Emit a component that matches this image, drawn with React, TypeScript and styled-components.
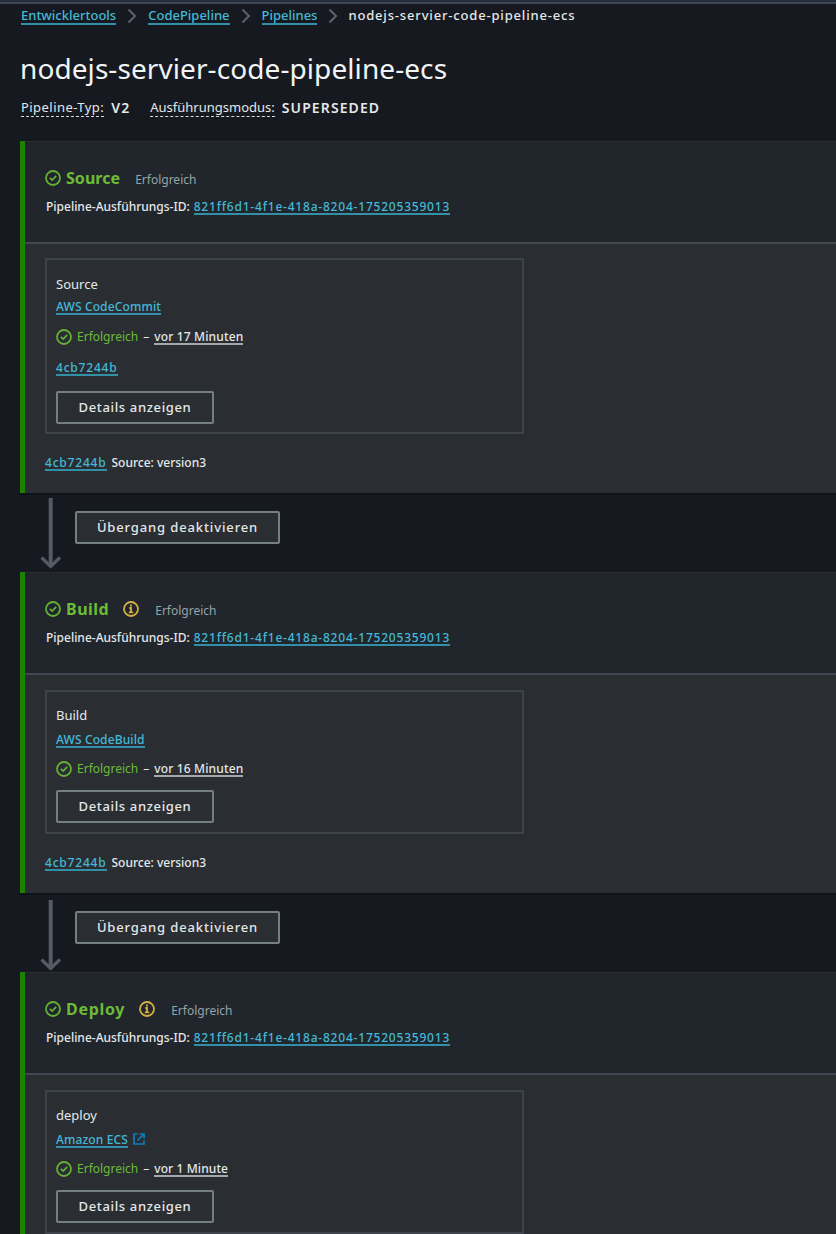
import React from "react";
import styled, { createGlobalStyle } from "styled-components";

const Global = createGlobalStyle`
  * { box-sizing: border-box; }
  html, body { margin: 0; padding: 0; background: #16191f; }
  body {
    font-family: "Noto Sans", "Open Sans", sans-serif;
    font-size: 12px;
    color: #e4e8e9;
  }
`;

const Page = styled.div`
  height: 1234px;
  overflow: hidden;
  background: #16191f;
`;

const TopBar = styled.div`
  height: 4px;
  background: #232f3e;
  border-bottom: 2px solid #414750;
`;

const Main = styled.main`
  padding-left: 20px;
`;

const Label = styled.span<{ $track?: number; $size?: number; $weight?: number; $color?: string }>`
  font-size: ${(p) => p.$size ?? 12}px;
  font-weight: ${(p) => p.$weight ?? 400};
  letter-spacing: ${(p) => p.$track ?? 0}px;
  color: ${(p) => p.$color ?? "#e4e8e9"};
  line-height: 16px;
  white-space: pre;
`;

const Link = styled.a<{ $track?: number; $size?: number }>`
  font-size: ${(p) => p.$size ?? 12}px;
  font-weight: 500;
  letter-spacing: ${(p) => p.$track ?? 0}px;
  line-height: ${(p) => (p.$size ? 17 : 15)}px;
  height: ${(p) => (p.$size ? 18 : 16)}px;
  color: #44b9d6;
  border-bottom: 2px solid #3490a8;
  white-space: pre;
`;

const Time = styled(Link)`
  margin-left: 5px;
  color: #e4e8e9;
  border-bottom-color: #a3a8aa;
`;

const Breadcrumbs = styled.nav`
  display: flex;
  align-items: center;
  height: 24px;
  padding-left: 1px;
`;

const CurrentPage = styled(Label)`
  margin: -2px 0 0 -1px;
`;

const Separator = styled.span`
  display: flex;
  justify-content: center;
  width: 32px;
`;

const Title = styled.h1`
  margin: 20px 0 0 0;
  height: 40px;
  line-height: 40px;
  font-size: 28px;
  font-weight: 400;
  letter-spacing: 0.08px;
  color: #f1f4f4;
  white-space: nowrap;
`;

const Meta = styled.div`
  display: flex;
  align-items: center;
  height: 20px;
  margin: 10px 0 23px 1px;
`;

const Term = styled(Label)`
  height: 18px;
  border-bottom: 1px dashed #d5dbdb;
`;

const Value = styled(Label)<{ $gap: number }>`
  margin: -1px ${(p) => p.$gap}px 0 7px;
`;

const Stage = styled.section<{ $height: number }>`
  height: ${(p) => p.$height}px;
  border-left: 5px solid #1d8102;
  background: #2a2e33;
`;

const StageHeader = styled.header`
  height: 103px;
  padding: 26px 0 0 20px;
  background: #21252c;
  border-top: 1px solid #2a2e33;
  border-bottom: 2px solid #414750;
`;

const StageTitle = styled.div`
  display: flex;
  align-items: center;
  height: 20px;
`;

const StageName = styled(Label)`
  margin-left: 5px;
  line-height: 20px;
`;

const WarnSlot = styled.span`
  display: flex;
  margin-left: 14px;
`;

const ExternalSlot = styled.span`
  display: flex;
  margin: -3px 0 0 5px;
`;

const StatusNote = styled(Label)<{ $gap: number }>`
  margin: 3px 0 0 ${(p) => p.$gap}px;
`;

const Line = styled.div<{ $top?: number }>`
  display: flex;
  align-items: center;
  height: 18px;
  margin-top: ${(p) => p.$top ?? 0}px;
`;

const ExecutionLabel = styled(Label)`
  margin: 0 4px 0 1px;
`;

const StageBody = styled.div<{ $top: number }>`
  padding: ${(p) => p.$top}px 0 0 20px;
`;

const ActionCard = styled.div<{ $height: number; $top: number }>`
  width: 479px;
  height: ${(p) => p.$height}px;
  padding: ${(p) => p.$top}px 0 0 9px;
  border: 2px solid #3d434b;
`;

const StatusText = styled(Label)`
  margin-left: 5px;
  margin-top: -1px;
`;

const Message = styled(Label)`
  margin-left: 5px;
`;

const Button = styled.button<{ $width: number; $top?: number }>`
  display: flex;
  align-items: center;
  justify-content: center;
  width: ${(p) => p.$width}px;
  height: 33px;
  margin: ${(p) => p.$top ?? 0}px 0 0;
  padding: 0 0 1px;
  border: 2px solid #748080;
  border-radius: 2px;
  background: #2a2e33;
  font-family: inherit;
`;

const Transition = styled.div<{ $pad: number }>`
  display: flex;
  align-items: flex-start;
  height: 79px;
  padding-left: 20px;
  border-top: 2px solid #101318;
  svg { margin-top: ${(p) => p.$pad}px; }
  button { margin: 16px 0 0 14px; }
`;

const Check = () => (
  <svg width="16" height="16" viewBox="0 0 16 16" fill="none" stroke="#64b034" strokeWidth="1.8">
    <circle cx="8" cy="8" r="7" />
    <path d="M4.8 7.8l2.400 2.300 4-4.200" />
  </svg>
);

const Warn = () => (
  <svg width="16" height="16" viewBox="0 0 16 16" fill="none" stroke="#d1b040" strokeWidth="1.8">
    <circle cx="8" cy="8" r="7" />
    <path d="M8 3.600v2M6.300 7H8v4.200M5.800 11.400h4.400" />
  </svg>
);

const Chevron = () => (
  <svg width="10" height="16" viewBox="0 0 10 16" fill="none" stroke="#5b636e" strokeWidth="2">
    <path d="M1.500 1.500L8 8l-6.500 6.500" />
  </svg>
);

const DownArrow = () => (
  <svg width="21" height="72" viewBox="0 0 21 72" fill="none" stroke="#545b64">
    <path d="M10.700 0v69" strokeWidth="4" />
    <path d="M1.500 59.500l9.200 9 9.200-9" strokeWidth="3.200" />
  </svg>
);

const External = () => (
  <svg width="12" height="12" viewBox="0 0 12 12" fill="none" stroke="#0f7dbd" strokeWidth="1.700">
    <path d="M4.500 1H1v10h10V7.500M6.500 1H11v4.500M11 1L4.500 7.500" />
  </svg>
);

type StageData = {
  name: string;
  nameTrack: number;
  warn?: boolean;
  noteGap: number;
  height: number;
  bodyTop: number;
  cardTop: number;
  cardHeight: number;
  action: string;
  provider: string;
  providerTop: number;
  statusTop: number;
  buttonTop: number;
  external?: boolean;
  time: string;
  timeTrack: number;
  cardCommit?: boolean;
  footer?: boolean;
};

const stages: StageData[] = [
  { name: "Source", nameTrack: 0.05, noteGap: 15, height: 352, bodyTop: 14, cardTop: 15, cardHeight: 176, action: "Source", provider: "AWS CodeCommit", providerTop: 5, statusTop: 12, buttonTop: 14, time: "vor 17 Minuten", timeTrack: 0.15, cardCommit: true, footer: true },
  { name: "Build", nameTrack: 0.5, warn: true, noteGap: 16, height: 321, bodyTop: 15, cardTop: 14, cardHeight: 144, action: "Build", provider: "AWS CodeBuild", providerTop: 7, statusTop: 11, buttonTop: 12, time: "vor 16 Minuten", timeTrack: 0.15, footer: true },
  { name: "Deploy", nameTrack: 0.7, warn: true, noteGap: 16, height: 321, bodyTop: 15, cardTop: 14, cardHeight: 144, action: "deploy", provider: "Amazon ECS", providerTop: 7, statusTop: 11, buttonTop: 12, external: true, time: "vor 1 Minute", timeTrack: 0.1 },
];

const StageView = ({ s }: { s: StageData }) => (
  <Stage $height={s.height}>
    <StageHeader>
      <StageTitle>
        <Check />
        <StageName $size={16} $weight={700} $track={s.nameTrack} $color="#6cbc35">{s.name}</StageName>
        {s.warn && <WarnSlot><Warn /></WarnSlot>}
        <StatusNote $gap={s.noteGap} $color="#95a5a6">Erfolgreich</StatusNote>
      </StageTitle>
      <Line $top={10}>
        <ExecutionLabel $weight={500}>Pipeline-Ausführungs-ID:</ExecutionLabel>
        <Link $track={0.79}>821ff6d1-4f1e-418a-8204-175205359013</Link>
      </Line>
    </StageHeader>
    <StageBody $top={s.bodyTop}>
      <ActionCard $height={s.cardHeight} $top={s.cardTop}>
        <Line><Label $size={13}>{s.action}</Label></Line>
        <Line $top={s.providerTop}>
          <Link $track={0.13}>{s.provider}</Link>
          {s.external && <ExternalSlot><External /></ExternalSlot>}
        </Line>
        <Line $top={s.statusTop}>
          <Check />
          <StatusText $color="#6cbc35">Erfolgreich</StatusText>
          <StatusText>–</StatusText>
          <Time $track={s.timeTrack}>{s.time}</Time>
        </Line>
        {s.cardCommit && <Line $top={13}><Link $track={0.8}>4cb7244b</Link></Line>}
        <Button $width={158} $top={s.buttonTop}><Label $size={13} $weight={500} $track={0.64}>Details anzeigen</Label></Button>
      </ActionCard>
      {s.footer && (
        <Line $top={20}>
          <Link $track={0.8}>4cb7244b</Link>
          <Message $weight={500}>Source: version3</Message>
        </Line>
      )}
    </StageBody>
  </Stage>
);

export default function App() {
  return (
    <Page>
      <Global />
      <TopBar />
      <Main>
        <Breadcrumbs>
          <Link $size={13}>Entwicklertools</Link>
          <Separator><Chevron /></Separator>
          <Link $size={13}>CodePipeline</Link>
          <Separator><Chevron /></Separator>
          <Link $size={13}>Pipelines</Link>
          <Separator><Chevron /></Separator>
          <CurrentPage $size={13} $weight={500} $track={0.83}>nodejs-servier-code-pipeline-ecs</CurrentPage>
        </Breadcrumbs>
        <Title>nodejs-servier-code-pipeline-ecs</Title>
        <Meta>
          <Term $size={13} $track={0.45}>Pipeline-Typ:</Term>
          <Value $size={14} $weight={600} $track={1.1} $gap={20}>V2</Value>
          <Term $size={13}>Ausführungsmodus:</Term>
          <Value $size={14} $weight={600} $track={1.1} $gap={0}>SUPERSEDED</Value>
        </Meta>
        {stages.map((s, i) => (
          <React.Fragment key={s.name}>
            <StageView s={s} />
            {i < 2 && (
              <Transition $pad={i === 0 ? 3 : 5}>
                <DownArrow />
                <Button $width={205}><Label $size={13} $weight={500} $track={0.87}>Übergang deaktivieren</Label></Button>
              </Transition>
            )}
          </React.Fragment>
        ))}
      </Main>
    </Page>
  );
}
